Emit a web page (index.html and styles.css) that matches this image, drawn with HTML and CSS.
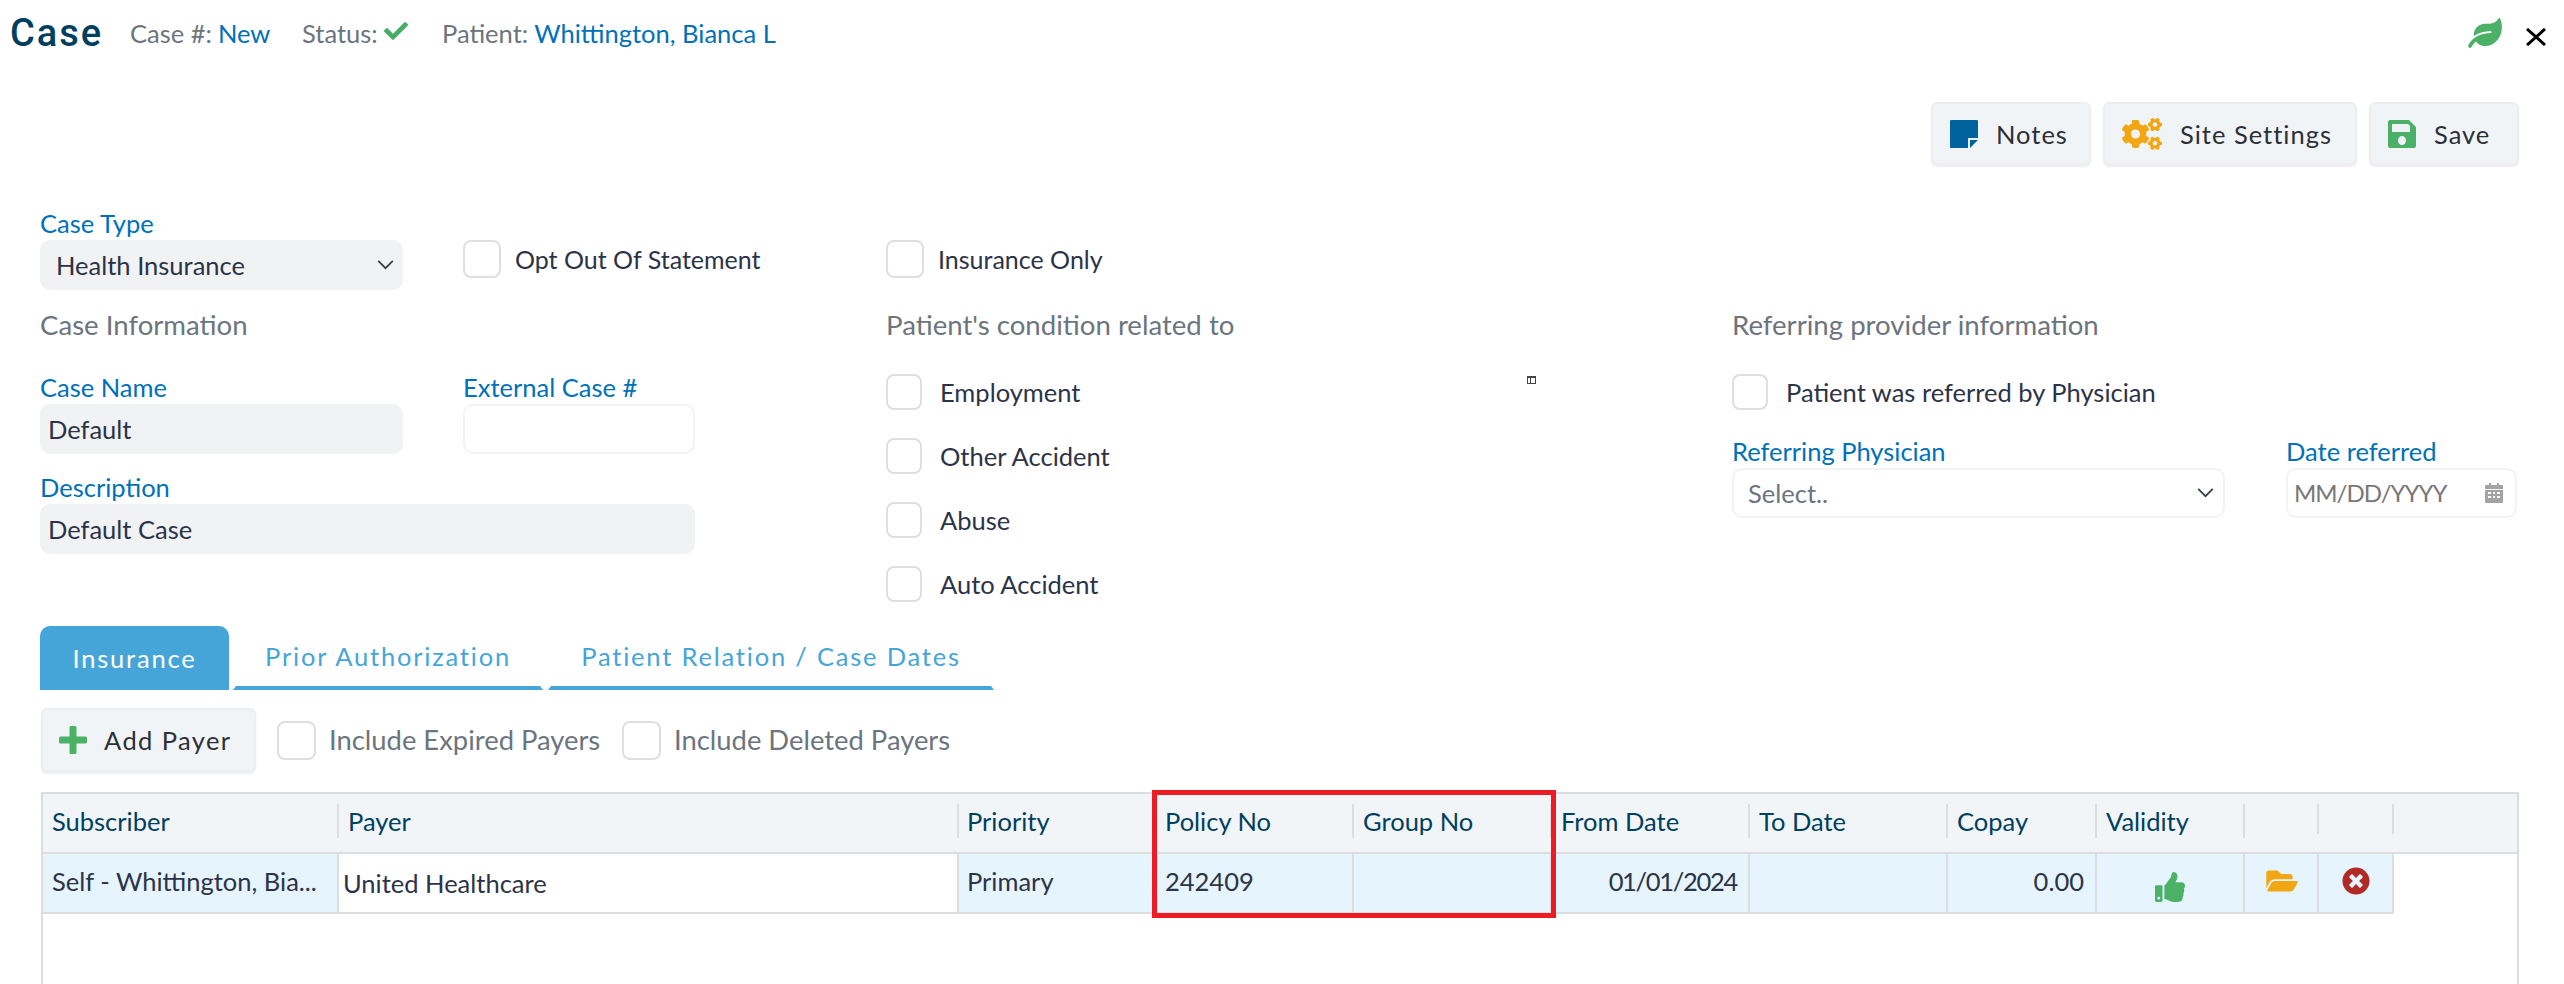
FILE: index.html
```html
<!DOCTYPE html>
<html lang="en">
<head>
<meta charset="utf-8">
<title>Case</title>
<link rel="stylesheet" href="styles.css">
</head>
<body>
<div class="app">
  <header class="topbar">
    <h1 class="title">Case</h1>
    <div class="meta meta-case"><span class="muted">Case #:</span> <span class="link">New</span></div>
    <div class="meta meta-status"><span class="muted">Status:</span>
      <svg class="ic-check" viewBox="0 0 512 512"><path d="M173.898 439.404l-166.4-166.4c-9.997-9.997-9.997-26.206 0-36.204l36.203-36.204c9.997-9.998 26.207-9.998 36.204 0L192 312.69 432.095 72.596c9.997-9.997 26.207-9.997 36.204 0l36.203 36.204c9.997 9.997 9.997 26.206 0 36.204l-294.4 294.401c-9.998 9.997-26.207 9.997-36.204-.001z"/></svg>
    </div>
    <div class="meta"><span class="muted">Patient:</span> <span class="link">Whittington, Bianca L</span></div>
    <div class="top-icons">
      <svg class="ic-leaf" viewBox="0 0 576 512"><path d="M546.2 9.7c-5.6-12.5-21.6-13-28.3-1.2C486.9 62.4 431.4 96 368 96h-80C182 96 96 182 96 288c0 7 .8 13.7 1.5 20.5C161.3 262.8 253.4 224 384 224c8.8 0 16 7.2 16 16s-7.2 16-16 16C132.6 256 26 410.1 2.4 468c-6.6 16.3 1.2 34.9 17.5 41.6 16.4 6.8 35-1.1 41.8-17.3 1.5-3.6 20.9-47.9 71.9-90.6 32.4 43.9 94 85.8 174.9 77.2C465.5 467.5 576 326.7 576 154.3c0-50.2-10.8-102.2-29.8-144.6z"/></svg>
      <svg class="ic-close" viewBox="0 0 20 18"><path d="M1 1l18 16M19 1L1 17"/></svg>
    </div>
  </header>

  <div class="toolbar">
    <button class="btn btn-notes" type="button">
      <svg class="ic-notes" viewBox="0 0 28 28"><path d="M1 0h26a1 1 0 0 1 1 1v17H19a1 1 0 0 0-1 1v9H1a1 1 0 0 1-1-1V1a1 1 0 0 1 1-1z"/><path d="M20 20h8l-8 8z"/></svg>
      Notes
    </button>
    <button class="btn btn-settings" type="button">
      <svg class="ic-cogs" viewBox="0 0 640 512"><path d="M512.1 191l-8.2 14.3c-3 5.3-9.4 7.5-15.1 5.4-11.8-4.4-22.6-10.7-32.1-18.6-4.6-3.8-5.8-10.5-2.8-15.7l8.2-14.3c-6.9-8-12.3-17.3-15.9-27.4h-16.5c-6 0-11.2-4.3-12.2-10.3-2-12-2.1-24.6 0-37.1 1-6 6.2-10.4 12.2-10.4h16.5c3.6-10.1 9-19.4 15.9-27.4l-8.2-14.3c-3-5.2-1.9-11.9 2.8-15.7 9.5-7.9 20.4-14.2 32.1-18.6 5.7-2.1 12.1.1 15.1 5.4l8.2 14.3c10.5-1.9 21.2-1.9 31.7 0L552 6.3c3-5.3 9.4-7.5 15.1-5.4 11.8 4.4 22.6 10.7 32.1 18.6 4.6 3.8 5.8 10.5 2.8 15.7l-8.2 14.3c6.9 8 12.3 17.3 15.9 27.4h16.5c6 0 11.2 4.3 12.2 10.3 2 12 2.1 24.6 0 37.1-1 6-6.2 10.4-12.2 10.4h-16.5c-3.6 10.1-9 19.4-15.9 27.4l8.2 14.3c3 5.2 1.9 11.9-2.8 15.7-9.5 7.9-20.4 14.2-32.1 18.6-5.7 2.1-12.1-.1-15.1-5.4l-8.2-14.3c-10.4 1.9-21.2 1.9-31.7 0zm-10.5-58.8c38.5 29.6 82.4-14.3 52.8-52.8-38.5-29.7-82.4 14.3-52.8 52.8zM386.3 286.1l33.7 16.8c10.1 5.8 14.5 18.1 10.5 29.1-8.9 24.2-26.4 46.4-42.6 65.8-7.4 8.9-20.2 11.1-30.3 5.3l-29.1-16.8c-16 13.7-34.6 24.6-54.9 31.7v33.6c0 11.6-8.3 21.6-19.7 23.6-24.6 4.2-50.4 4.4-75.9 0-11.5-2-20-11.9-20-23.6V418c-20.3-7.2-38.9-18-54.9-31.7L74 403c-10 5.8-22.9 3.6-30.3-5.3-16.2-19.4-33.3-41.6-42.2-65.7-4-10.9.4-23.2 10.5-29.1l33.3-16.8c-3.9-20.9-3.9-42.4 0-63.4L12 205.8c-10.1-5.8-14.6-18.1-10.5-29 8.9-24.2 26-46.4 42.2-65.8 7.4-8.9 20.2-11.1 30.3-5.3l29.1 16.8c16-13.7 34.6-24.6 54.9-31.7V57.1c0-11.5 8.2-21.5 19.6-23.5 24.6-4.2 50.5-4.4 76-.1 11.5 2 20 11.9 20 23.6v33.6c20.3 7.2 38.9 18 54.9 31.7l29.1-16.8c10-5.8 22.9-3.6 30.3 5.3 16.2 19.4 33.2 41.6 42.1 65.8 4 10.9.1 23.2-10 29.1l-33.7 16.8c3.9 21 3.9 42.5 0 63.5zm-117.6 21.1c59.2-77-28.7-164.9-105.7-105.7-59.2 77 28.7 164.9 105.7 105.7zm243.4 182.7l-8.2 14.3c-3 5.3-9.4 7.5-15.1 5.4-11.8-4.4-22.6-10.7-32.1-18.6-4.6-3.8-5.8-10.5-2.8-15.7l8.2-14.3c-6.9-8-12.3-17.3-15.9-27.4h-16.5c-6 0-11.2-4.3-12.2-10.3-2-12-2.1-24.6 0-37.1 1-6 6.2-10.4 12.2-10.4h16.5c3.6-10.1 9-19.4 15.9-27.4l-8.2-14.3c-3-5.2-1.9-11.9 2.8-15.7 9.5-7.9 20.4-14.2 32.1-18.6 5.7-2.1 12.1.1 15.1 5.4l8.2 14.3c10.5-1.9 21.2-1.9 31.7 0l8.2-14.3c3-5.3 9.4-7.5 15.1-5.4 11.8 4.4 22.6 10.7 32.1 18.6 4.6 3.8 5.8 10.5 2.8 15.7l-8.2 14.3c6.9 8 12.3 17.3 15.9 27.4h16.5c6 0 11.2 4.3 12.2 10.3 2 12 2.1 24.6 0 37.1-1 6-6.2 10.4-12.2 10.4h-16.5c-3.6 10.1-9 19.4-15.9 27.4l8.2 14.3c3 5.2 1.9 11.9-2.8 15.7-9.5 7.9-20.4 14.2-32.1 18.6-5.7 2.1-12.1-.1-15.1-5.4l-8.2-14.3c-10.4 1.9-21.2 1.9-31.7 0zM501.6 431c38.5 29.6 82.4-14.3 52.8-52.8-38.5-29.6-82.4 14.3-52.8 52.8z"/></svg>
      Site Settings
    </button>
    <button class="btn btn-save" type="button">
      <svg class="ic-save" viewBox="0 0 28 28"><path fill-rule="evenodd" d="M2 0h19l7 7v19a2 2 0 0 1-2 2H2a2 2 0 0 1-2-2V2a2 2 0 0 1 2-2zM4 4v8h18V6l-2-2zM14 16a4 4.5 0 1 0 0 9 4 4.5 0 0 0 0-9z"/></svg>
      Save
    </button>
  </div>

  <main class="form">
    <svg class="stray" viewBox="0 0 9 8"><path d="M0 0h9v8H0zM1 2v5h2V2zM4 2v5h4V2z" fill-rule="evenodd"/></svg>

    <div class="col-a top-a">
      <div class="field w-a">
        <label class="label">Case Type</label>
        <div class="input filled select"><span>Health Insurance</span>
          <svg class="chev" viewBox="0 0 18 11"><path d="M1 1l8 8 8-8"/></svg>
        </div>
      </div>
      <label class="check check-top"><span class="box"></span><span>Opt Out Of Statement</span></label>
    </div>
    <div class="top-b">
      <label class="check check-top"><span class="box"></span><span>Insurance Only</span></label>
    </div>
    <div></div>

    <section class="col">
      <h2 class="heading">Case Information</h2>
      <div class="fields-a">
        <div class="field">
          <label class="label">Case Name</label>
          <div class="input filled tight">Default</div>
        </div>
        <div class="field">
          <label class="label">External Case #</label>
          <div class="input outline"></div>
        </div>
        <div class="field span-2">
          <label class="label">Description</label>
          <div class="input filled tight">Default Case</div>
        </div>
      </div>
    </section>

    <section class="col">
      <h2 class="heading">Patient's condition related to</h2>
      <div class="check-list">
        <label class="check"><span class="box"></span><span>Employment</span></label>
        <label class="check"><span class="box"></span><span>Other Accident</span></label>
        <label class="check"><span class="box"></span><span>Abuse</span></label>
        <label class="check"><span class="box"></span><span>Auto Accident</span></label>
      </div>
    </section>

    <section class="col">
      <h2 class="heading">Referring provider information</h2>
      <div class="check-list">
        <label class="check"><span class="box"></span><span>Patient was referred by Physician</span></label>
      </div>
      <div class="fields-c">
        <div class="field">
          <label class="label">Referring Physician</label>
          <div class="input outline select placeholder-wide"><span class="ph">Select..</span>
            <svg class="chev" viewBox="0 0 18 11"><path d="M1 1l8 8 8-8"/></svg>
          </div>
        </div>
        <div class="field">
          <label class="label">Date referred</label>
          <div class="input outline date"><span class="ph">MM/DD/YYYY</span>
            <svg class="ic-cal" viewBox="0 0 18 20"><path fill-rule="evenodd" d="M4 0h2v2h6V0h2v2h3a1 1 0 0 1 1 1v3H0V3a1 1 0 0 1 1-1h3zM0 7h18v12a1 1 0 0 1-1 1H1a1 1 0 0 1-1-1zM3 9v2h3V9zM8 9v2h2V9zM12 9v2h3V9zM3 13v2h3v-2zM8 13v2h2v-2zM12 13v2h3v-2z"/></svg>
          </div>
        </div>
      </div>
    </section>
  </main>

  <nav class="tabs">
    <a class="tab active">Insurance</a>
    <a class="tab tab-prior">Prior Authorization</a>
    <a class="tab tab-rel">Patient Relation / Case Dates</a>
  </nav>

  <div class="actions">
    <button class="btn btn-add" type="button">
      <svg class="ic-plus" viewBox="0 0 28 28"><path d="M12 0h4a1.500 1.500 0 0 1 1.500 1.500V10.500h9A1.500 1.500 0 0 1 28 12v4a1.500 1.500 0 0 1-1.500 1.500h-9v9A1.500 1.500 0 0 1 16 28h-4a1.500 1.500 0 0 1-1.500-1.500v-9h-9A1.500 1.500 0 0 1 0 16v-4a1.500 1.500 0 0 1 1.500-1.500h9v-9A1.500 1.500 0 0 1 12 0z"/></svg>
      Add Payer
    </button>
    <label class="check check-inc inc-a"><span class="box"></span><span>Include Expired Payers</span></label>
    <label class="check check-inc"><span class="box"></span><span>Include Deleted Payers</span></label>
  </div>

  <div class="grid-box">
    <div class="highlight"></div>
    <div class="grid-head">
      <div class="th">Subscriber</div>
      <div class="th">Payer</div>
      <div class="th">Priority</div>
      <div class="th">Policy No</div>
      <div class="th">Group No</div>
      <div class="th">From Date</div>
      <div class="th">To Date</div>
      <div class="th">Copay</div>
      <div class="th">Validity</div>
      <div class="th short"></div>
      <div class="th short"></div>
    </div>
    <div class="grid-row">
      <div class="td">Self - Whittington, Bia...</div>
      <div class="td white">United Healthcare</div>
      <div class="td">Primary</div>
      <div class="td">242409</div>
      <div class="td"></div>
      <div class="td right date-val">01/01/2024</div>
      <div class="td"></div>
      <div class="td right">0.00</div>
      <div class="td center">
        <svg class="ic-thumb" viewBox="0 0 512 512"><path d="M104 224H24c-13.255 0-24 10.745-24 24v240c0 13.255 10.745 24 24 24h80c13.255 0 24-10.745 24-24V248c0-13.255-10.745-24-24-24zM64 472c-13.255 0-24-10.745-24-24s10.745-24 24-24 24 10.745 24 24-10.745 24-24 24zM384 81.452c0 42.416-25.97 66.208-33.277 94.548h101.723c33.397 0 59.397 27.746 59.553 58.098.084 17.938-7.546 37.249-19.439 49.197l-.11.11c9.836 23.337 8.237 56.037-9.308 79.469 8.681 25.895-.069 57.704-16.382 74.757 4.298 17.598 2.244 32.575-6.148 44.632C440.202 511.587 389.616 512 346.839 512l-2.845-.001c-48.287-.017-87.806-17.598-119.56-31.725-15.957-7.099-36.821-15.887-52.651-16.178-6.54-.12-11.783-5.457-11.783-11.998v-213.77c0-3.2 1.282-6.271 3.558-8.521 39.614-39.144 56.648-80.587 89.117-113.111 14.804-14.832 20.188-37.236 25.393-58.902C282.515 39.293 291.817 0 312 0c24 0 72 8 72 81.452z"/></svg>
      </div>
      <div class="td center">
        <svg class="ic-folder" viewBox="0 0 576 512"><path d="M572.694 292.093L500.27 416.248A63.997 63.997 0 0 1 444.989 448H45.025c-18.523 0-30.064-20.093-20.731-36.093l72.424-124.155A64 64 0 0 1 152 256h399.964c18.523 0 30.064 20.093 20.73 36.093zM152 224h328v-48c0-26.51-21.49-48-48-48H272l-64-64H48C21.49 64 0 85.49 0 112v278.046l69.077-118.418C86.214 242.25 117.989 224 152 224z"/></svg>
      </div>
      <div class="td center">
        <svg class="ic-x" viewBox="0 0 512 512"><path d="M256 8C119 8 8 119 8 256s111 248 248 248 248-111 248-248S393 8 256 8zm121.6 313.1c4.7 4.7 4.7 12.3 0 17L338 377.6c-4.7 4.7-12.3 4.7-17 0L256 312l-65.1 65.6c-4.7 4.7-12.3 4.7-17 0L134.4 338c-4.7-4.7-4.7-12.3 0-17l65.6-65-65.6-65.1c-4.7-4.7-4.7-12.3 0-17l39.6-39.6c4.7-4.7 12.3-4.7 17 0l65 65.7 65.1-65.6c4.7-4.7 12.3-4.7 17 0l39.6 39.6c4.7 4.7 4.7 12.3 0 17L312 256l65.6 65.1z"/></svg>
      </div>
    </div>
  </div>
</div>
</body>
</html>
```

FILE: styles.css
```css
* { box-sizing: border-box; }
html, body { margin: 0; padding: 0; background: #fff; }
body { font-family: Lato, "Liberation Sans", sans-serif; font-size: 25.5px; line-height: 24px; color: #2c3347; }
svg { display: block; flex: none; }
.app { position: relative; width: 2564px; height: 984px; overflow: hidden; display: flex; flex-direction: column; }

.topbar { height: 66px; display: flex; align-items: center; padding-left: 10px; padding-right: 18px; flex: none; }
.title { margin: 0; width: 120px; font-family: Roboto, "Liberation Sans", sans-serif; font-size: 38px; font-weight: 500; letter-spacing: 2px; color: #003f5f; line-height: 44px; }
.meta { display: flex; align-items: center; gap: 6px; white-space: pre; }
.meta-case { width: 172px; }
.meta-status { width: 140px; }
.muted { color: #6c757d; }
.link { color: #0071b9; }
.ic-check { width: 24px; height: 24px; fill: #46ad64; margin-top: -4px; }
.top-icons { margin-left: auto; display: flex; align-items: center; gap: 24px; }
.ic-leaf { width: 34px; height: 30px; fill: #4bb166; }
.ic-close { width: 20px; height: 18px; fill: none; stroke: #000; stroke-width: 3; margin-top: 8px; }

.toolbar { flex: none; margin-top: 36px; padding-right: 45px; display: flex; justify-content: flex-end; gap: 12px; }
.btn { display: flex; align-items: center; height: 63px; padding: 0; font: inherit; color: #2c2f36; letter-spacing: 1px; background: #f1f4f6; border: 2px solid #eceeef; border-radius: 6px; box-shadow: 0 2px 2px rgba(0,0,0,.07); }
.btn-notes { width: 160px; padding-left: 17px; gap: 18px; }
.btn-settings { width: 254px; padding-left: 17px; gap: 18px; }
.btn-save { width: 150px; padding-left: 17px; gap: 18px; }
.ic-notes { width: 28px; height: 28px; fill: #00639e; }
.ic-cogs { width: 40px; height: 32px; fill: #f2a614; }
.ic-save { width: 28px; height: 28px; fill: #4bb166; }

.form { position: relative; flex: none; margin-top: 47px; padding-left: 40px; display: grid; grid-template-columns: 846px 846px 1fr; }
.stray { position: absolute; left: 1527px; top: 164px; width: 9px; height: 8px; fill: #444; }
.col-a { display: flex; gap: 60px; }
.w-a { width: 363px; }
.label { display: block; height: 24px; line-height: 22px; margin-bottom: 4px; color: #0071b9; white-space: nowrap; }
.input { height: 50px; border-radius: 10px; display: flex; align-items: center; }
.filled { background: #f1f2f4; padding-left: 16px; }
.tight { padding-left: 8px; }
.outline { background: #fff; border: 2px solid #f3f3f4; }
.select { justify-content: space-between; padding-right: 9px; }
.placeholder-wide { padding-left: 14px; }
.ph { color: #6c757d; }
.chev { width: 17px; height: 10px; fill: none; stroke: #3a3f4a; stroke-width: 2; }
.date { padding-left: 6px; padding-right: 12px; justify-content: space-between; }
.date .ph { color: #777; font-size: 24px; letter-spacing: -1px; }
.ic-cal { width: 18px; height: 20px; fill: #a3a3a3; }

.heading { margin: 20px 0 0; height: 30px; font-size: 27.6px; line-height: 30px; font-weight: 400; color: #6c757d; }
.fields-a { margin-top: 36px; width: 655px; display: grid; grid-template-columns: 363px 232px; column-gap: 60px; row-gap: 22px; }
.span-2 { grid-column: 1 / span 2; }
.check { display: flex; align-items: center; gap: 18px; white-space: nowrap; }
.box { display: block; flex: none; width: 36px; height: 36px; background: #fff; border: 2px solid #dfdfdf; border-radius: 8px; }
.check-top { margin-top: 28px; align-self: flex-start; height: 38px; gap: 14px; font-size: 25px; }
.check-top .box { width: 38px; height: 38px; }
.check-list { margin-top: 34px; display: flex; flex-direction: column; gap: 28px; }
.fields-c { margin-top: 30px; width: 785px; display: grid; grid-template-columns: 493px 231px; column-gap: 61px; }

.tabs { flex: none; margin-top: 24px; padding-left: 40px; display: flex; gap: 4px; }
.tab { height: 64px; display: flex; align-items: center; justify-content: center; letter-spacing: 1.800px; color: #45a5d8; border-bottom: 4px solid #45a5d8; border-left: 3px solid transparent; border-right: 3px solid transparent; }
.tab.active { width: 189px; background: #45a5d8; color: #fff; border: 0; border-radius: 10px 10px 0 0; }
.tab-prior { width: 310px; }
.tab-rel { width: 446px; margin-left: 1px; }

.actions { flex: none; margin-top: 18px; margin-left: 41px; display: flex; align-items: center; }
.btn-add { width: 215px; height: 64px; padding-left: 16px; gap: 17px; letter-spacing: 1.400px; margin-right: 21px; }
.ic-plus { width: 28px; height: 28px; fill: #4bb166; }
.check-inc { gap: 13px; color: #6c757d; font-size: 27.4px; }
.check-inc .box { width: 39px; height: 39px; }
.inc-a { width: 345px; }

.grid-box { position: relative; flex: 1; margin-top: 20px; margin-left: 41px; width: 2478px; border: 2px solid #dcdddf; border-bottom: 0; }
.grid-head, .grid-row { display: grid; grid-template-columns: 296px 620px 197px 198px 198px 198px 198px 149px 148px 74px 75px; justify-content: start; }
.grid-head { height: 60px; background: #f2f5f7; border-bottom: 2px solid #dcdddf; align-items: start; }
.grid-row { height: 60px; width: 2351px; border-bottom: 2px solid #dcdddf; background: #e6f4fd; }
.th { height: 34px; margin-top: 10px; padding-left: 9px; color: #00405f; border-right: 2px solid #dcdddf; display: flex; align-items: center; }
.th:nth-child(3) { padding-left: 8px; }
.th.short { height: 30px; }
.td { height: 58px; padding: 0 9px 4px; border-right: 2px solid #dcdddf; display: flex; align-items: center; white-space: nowrap; overflow: hidden; }
.td:nth-child(3) { padding-left: 8px; }
.white { background: #fff; padding: 0 9px 0 4px; }
.right { justify-content: flex-end; padding-right: 11px; }
.date-val { letter-spacing: -1.300px; }
.center { justify-content: center; }
.ic-thumb { width: 30px; height: 30px; fill: #4bb166; margin-top: 11px; }
.ic-folder { width: 32px; height: 28px; fill: #f2a614; margin-left: 2px; }
.ic-x { width: 28px; height: 28px; fill: #b22a25; }
.highlight { position: absolute; left: 1109px; top: -4px; width: 404px; height: 128px; border: 5px solid #ed1c24; pointer-events: none; z-index: 2; }
```
